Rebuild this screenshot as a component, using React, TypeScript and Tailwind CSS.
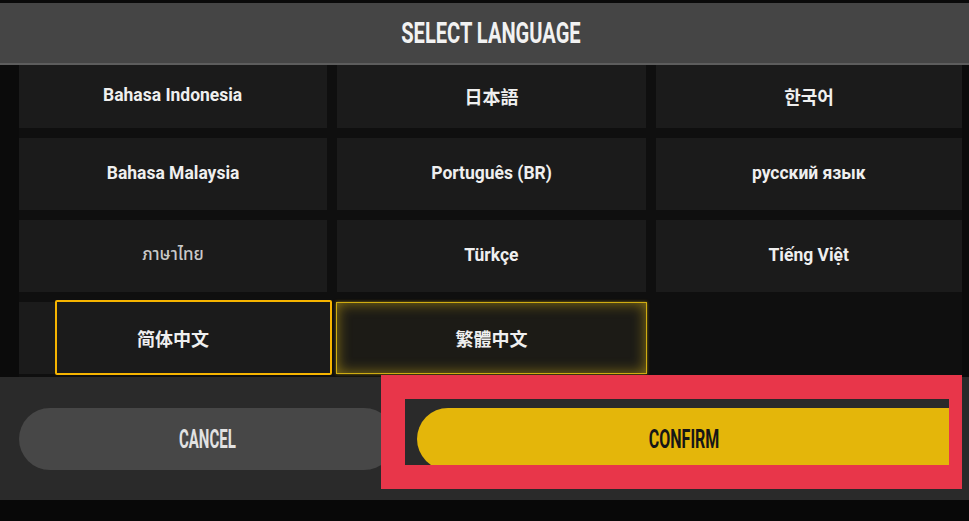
import React from "react";

type Cell = { label: string; kind?: "thai" | "cjk" | "kr"; state?: "selected" | "glow" | "empty" };

const rows: Cell[][] = [
  [{ label: "Bahasa Indonesia" }, { label: "日本語", kind: "cjk" }, { label: "한국어", kind: "kr" }],
  [{ label: "Bahasa Malaysia" }, { label: "Português (BR)" }, { label: "русский язык" }],
  [{ label: "ภาษาไทย", kind: "thai" }, { label: "Türkçe" }, { label: "Tiếng Việt" }],
  [
    { label: "简体中文", kind: "cjk", state: "selected" },
    { label: "繁體中文", kind: "cjk", state: "glow" },
    { label: "", state: "empty" },
  ],
];

function Label({ cell }: { cell: Cell }) {
  if (cell.kind === "thai") {
    return (
      <span className="relative inline-block font-[family-name:'Noto_Sans_Thai','Noto_Sans',Roboto,sans-serif] text-[17px] font-medium text-[#c9c9c9]">
        {cell.label}
      </span>
    );
  }
  if (cell.kind === "cjk") {
    return (
      <span className="relative inline-block font-[family-name:'Noto_Sans_CJK_SC','Noto_Sans_CJK_TC','Noto_Sans_CJK_JP',sans-serif] text-[18px] font-bold text-[#efefef]">
        {cell.label}
      </span>
    );
  }
  if (cell.kind === "kr") {
    return (
      <span className="relative inline-block font-[family-name:'Noto_Sans_CJK_KR',sans-serif] text-[18px] font-bold text-[#efefef]">
        {cell.label}
      </span>
    );
  }
  return (
    <span className="relative -top-px inline-block scale-x-[0.92] whitespace-nowrap font-[family-name:Roboto,'Noto_Sans',sans-serif] text-[19px] font-bold text-[#efefef]">
      {cell.label}
    </span>
  );
}

function CellBox({ cell }: { cell: Cell }) {
  if (cell.state === "empty") return <div />;
  if (cell.state === "glow") {
    return (
      <div className="-mx-px flex items-center justify-center border border-[#cfac12] bg-[#1c1b16] shadow-[inset_0_0_14px_rgba(214,176,20,0.6),0_0_3px_rgba(214,176,20,0.6)]">
        <Label cell={cell} />
      </div>
    );
  }
  return (
    <div className="relative flex items-center justify-center bg-[#1b1b1b]">
      {cell.state === "selected" && (
        <div className="absolute -top-[2px] -bottom-[1px] left-[36px] -right-[5px] rounded-[2px] border-2 border-[#f6b400] bg-[#1b1b1b]" />
      )}
      <Label cell={cell} />
    </div>
  );
}

export default function App() {
  return (
    <div className="flex h-[521px] w-[969px] flex-col overflow-hidden bg-[#080808]">
      <div className="h-[3px] bg-[#0a0a0a]" />
      <div className="flex h-[60px] items-center justify-center bg-[#454545] pl-[19px] pr-[6px]">
        <span className="inline-block scale-x-[0.67] whitespace-nowrap font-[family-name:Roboto,sans-serif] text-[30px] font-bold leading-none text-[#f2f2f2]">
          SELECT LANGUAGE
        </span>
      </div>
      <div className="h-[2px] bg-[#5d5d5d]" />
      <div className="flex h-[312px] bg-[#0f0f0f]">
        <div className="w-[19px] bg-[#0b0b0b]" />
        <div className="grid grid-cols-[308px_309px_306px] grid-rows-[63px_72px_72px_72px] gap-x-[10px] gap-y-[10px]">
          {rows.flat().map((c, i) => (
            <CellBox key={i} cell={c} />
          ))}
        </div>
        <div className="flex-1 bg-[#0b0b0b]" />
      </div>
      <div className="relative flex h-[123px] items-start bg-[#2a2a2a] pl-[19px] pt-[31px]">
        <div className="flex h-[62px] w-[376px] items-center justify-center rounded-full bg-[#474747]">
          <span className="inline-block scale-x-[0.6] font-[family-name:Roboto,sans-serif] text-[25px] font-bold leading-none text-[#e2e2e2]">
            CANCEL
          </span>
        </div>
        <div className="ml-[22px] flex h-[62px] w-[535px] items-center justify-center rounded-l-full rounded-r-[14px] bg-[#e4b60a]">
          <span className="inline-block scale-x-[0.64] font-[family-name:Roboto,sans-serif] text-[25px] font-bold leading-none text-[#161616]">
            CONFIRM
          </span>
        </div>
        <div className="pointer-events-none absolute left-[381px] top-[-2px] h-[114px] w-[581px] border-[24px] border-r-[13px] border-[#e8364a]" />
      </div>
      <div className="flex-1 bg-[#080808]" />
    </div>
  );
}
